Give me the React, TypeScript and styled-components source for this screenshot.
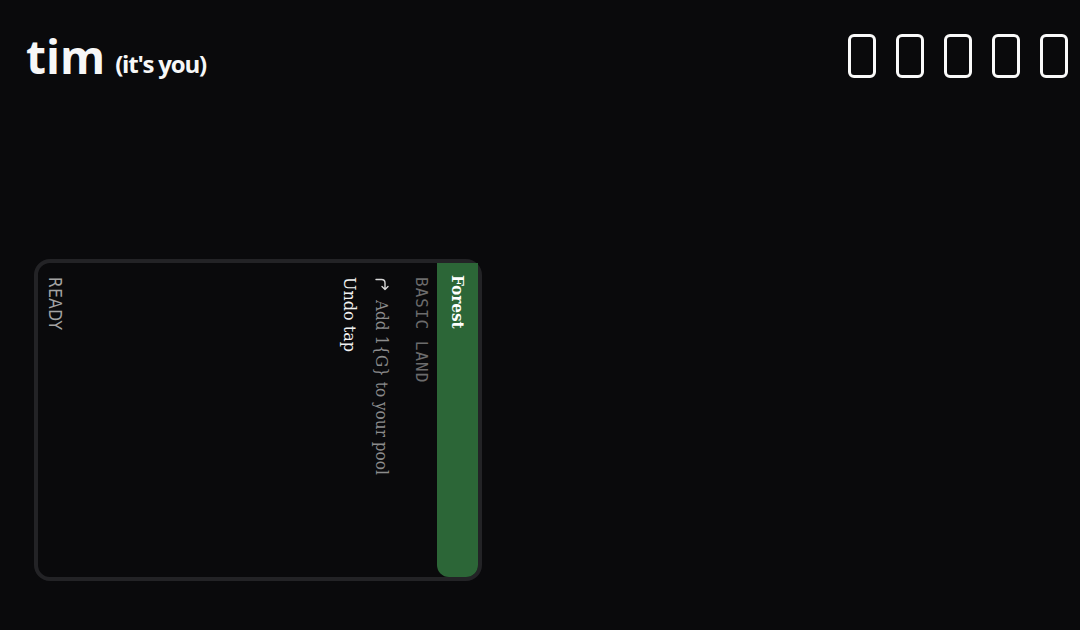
import { createGlobalStyle } from "styled-components";
import styled from "styled-components";

const GlobalStyle = createGlobalStyle`
  html, body {
    margin: 0;
    padding: 0;
    background: #0a0a0c;
  }
  body {
    font-family: "Open Sans", "DejaVu Sans", sans-serif;
    color: #f5f5f5;
  }
`;

function TapArrow() {
  return (
    <ArrowIcon viewBox="0 0 14 14" aria-hidden="true">
      <path d="M1 2.5H6.5Q10 2.5 10 6V12.5M7 9.5L10 12.5L13 9.5" />
    </ArrowIcon>
  );
}

export default function App() {
  return (
    <>
      <GlobalStyle />
      <Page>
        <Header>
          <Title>
            tim <Sub>(it's you)</Sub>
          </Title>
          <Slots>
            {[0, 1, 2, 3, 4].map((i) => (
              <Slot key={i} />
            ))}
          </Slots>
        </Header>
        <Board>
          <Card>
            <NameStrip>Forest</NameStrip>
            <CardBody>
              <TypeLine>BASIC LAND</TypeLine>
              <Ability>
                <TapArrow />
                Add 1{"{G}"} to your pool
              </Ability>
              <Action>Undo tap</Action>
              <Status>READY</Status>
            </CardBody>
          </Card>
        </Board>
      </Page>
    </>
  );
}

const Page = styled.div`
  width: 1080px;
  height: 630px;
  overflow: hidden;
`;

const Header = styled.header`
  display: flex;
  align-items: center;
  justify-content: space-between;
  height: 111px;
  padding: 0 12px 0 26px;
  box-sizing: border-box;
`;

const Title = styled.h1`
  margin: 0;
  font-size: 46px;
  font-weight: 700;
  color: #f7f7f7;
`;

const Sub = styled.span`
  margin-left: -2px;
  font-size: 24px;
  letter-spacing: -1.2px;
  vertical-align: 1px;
`;

const Slots = styled.div`
  display: flex;
  gap: 20px;
`;

const Slot = styled.span`
  width: 28px;
  height: 44px;
  box-sizing: border-box;
  border: 3px solid #fafafa;
  border-radius: 6px;
`;

const Board = styled.main`
  padding: 148px 0 0 34px;
`;

const Card = styled.div`
  writing-mode: vertical-rl;
  width: 448px;
  height: 322px;
  box-sizing: border-box;
  border: 4px solid #232326;
  border-radius: 16px;
  background: #0a0a0c;
  display: flex;
  flex-direction: column;
`;

const NameStrip = styled.div`
  block-size: 41px;
  line-height: 41px;
  flex-shrink: 0;
  padding-inline-start: 12px;
  background: #2c6637;
  border-start-end-radius: 12px;
  border-end-end-radius: 12px;
  font-family: "DejaVu Serif Condensed", "DejaVu Serif", serif;
  font-stretch: condensed;
  font-weight: 700;
  font-size: 17px;
  color: #ffffff;
`;

const CardBody = styled.div`
  flex: 1;
  display: flex;
  flex-direction: column;
  padding-block: 4px 5px;
  padding-inline-start: 14px;
`;

const TypeLine = styled.div`
  line-height: 24px;
  font-family: "DejaVu Sans Mono", monospace;
  font-size: 16px;
  letter-spacing: 1px;
  color: #6c6c6c;
`;

const Ability = styled.div`
  display: flex;
  align-items: center;
  margin-block-start: 15px;
  line-height: 24px;
  font-family: "DejaVu Serif Condensed", "DejaVu Serif", serif;
  font-stretch: condensed;
  font-size: 17px;
  color: #8c8c8c;
`;

const ArrowIcon = styled.svg`
  width: 14px;
  height: 14px;
  margin-block-start: 1px;
  margin-inline-end: 9px;
  flex-shrink: 0;
  fill: none;
  stroke: #d8d8d8;
  stroke-width: 1.4;
  stroke-linecap: round;
  stroke-linejoin: round;
`;

const Action = styled.div`
  margin-block-start: 9px;
  line-height: 24px;
  font-family: "DejaVu Serif", serif;
  font-size: 16px;
  color: #f2f2f2;
`;

const Status = styled.div`
  margin-block-start: auto;
  line-height: 24px;
  font-family: "DejaVu Sans Condensed", "DejaVu Sans", sans-serif;
  font-stretch: condensed;
  font-size: 17px;
  letter-spacing: 0.5px;
  color: #a3a3a3;
`;
